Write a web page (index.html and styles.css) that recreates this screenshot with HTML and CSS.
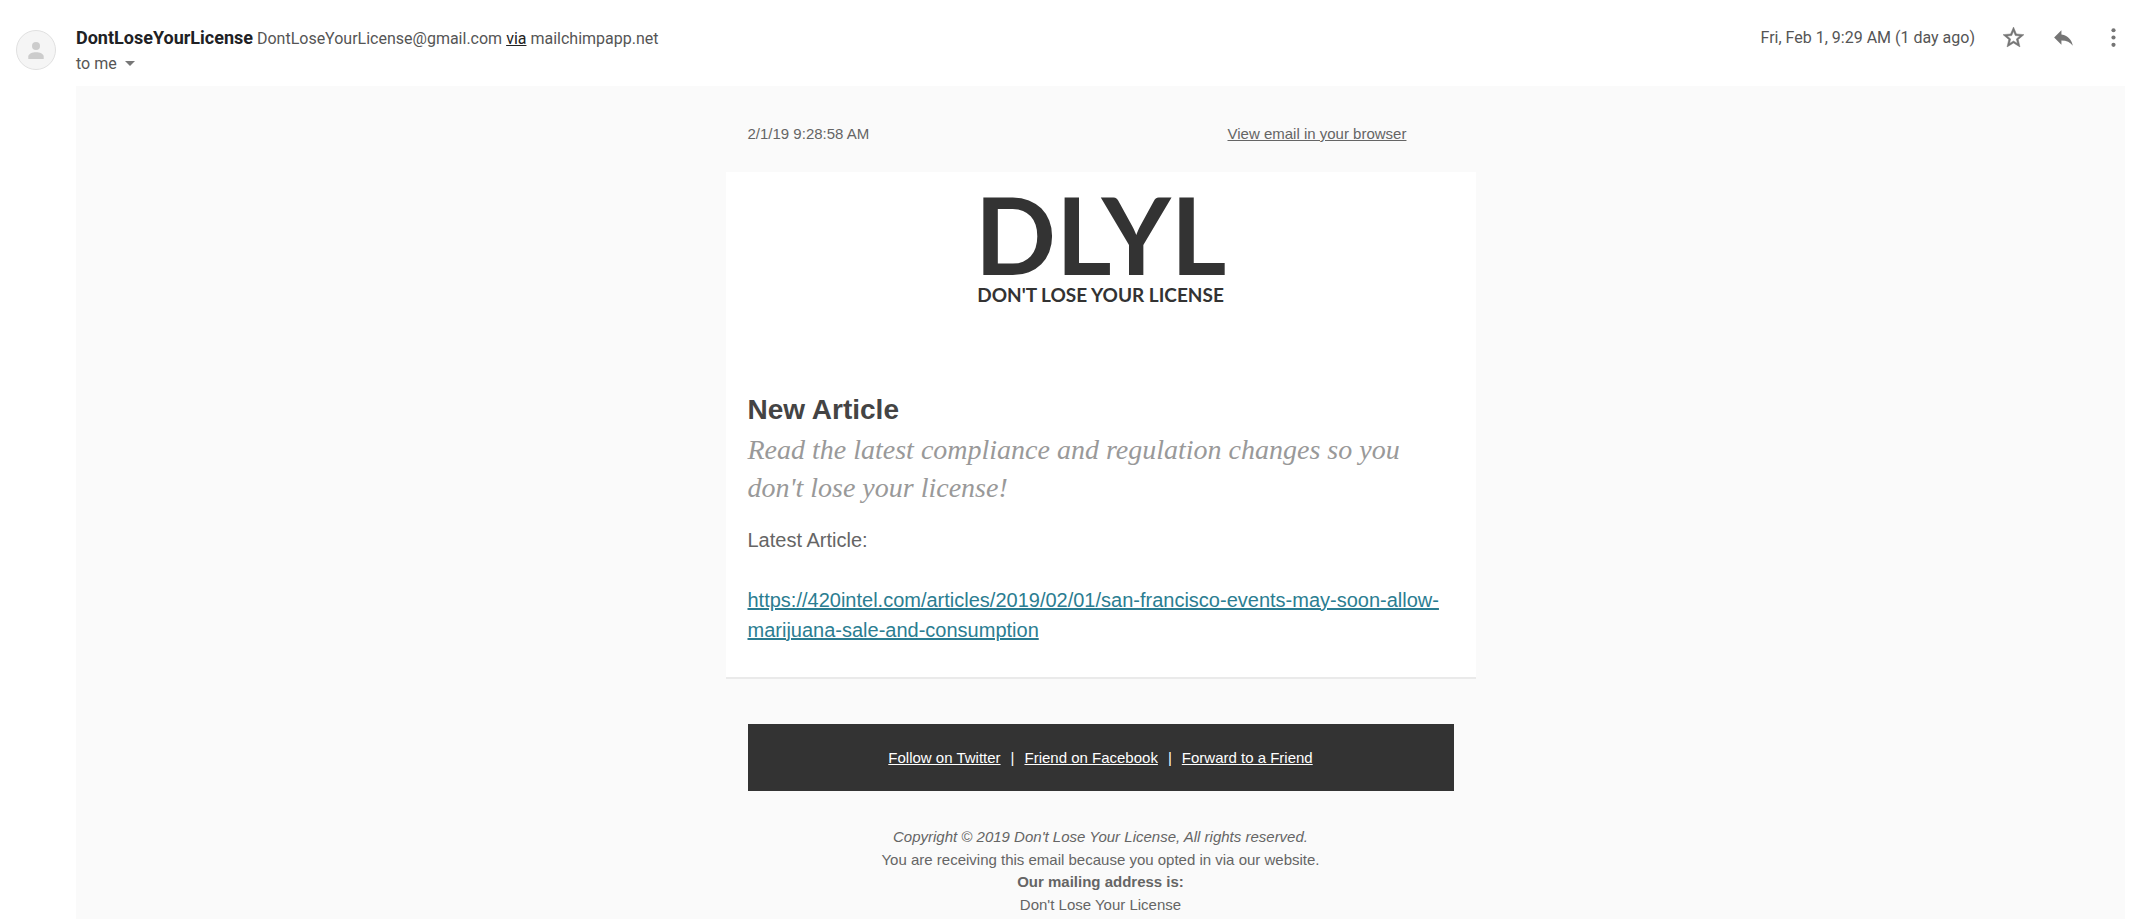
FILE: index.html
```html
<!DOCTYPE html>
<html lang="en">
<head>
<meta charset="utf-8">
<title>New Article</title>
<link rel="stylesheet" href="styles.css">
</head>
<body>
<article class="message">
  <header class="message-header">
    <svg class="avatar" viewBox="0 0 40 40" aria-hidden="true">
      <circle cx="20" cy="20" r="19.5" fill="#f5f5f5" stroke="#e0e0e0"/>
      <circle cx="20" cy="16" r="4" fill="#cccccc"/>
      <path d="M12.300 29v-2.500c0-2.800 4.200-4.300 7.700-4.300s7.700 1.500 7.700 4.300V29z" fill="#cccccc"/>
    </svg>
    <div class="sender">
      <div class="sender-line">
        <span class="sender-name">DontLoseYourLicense</span>
        <span>DontLoseYourLicense@gmail.com <a class="via" href="#">via</a> mailchimpapp.net</span>
      </div>
      <button class="recipient" type="button">to me
        <svg class="caret" viewBox="0 0 10 5" aria-hidden="true"><path d="M0 0h10L5 5z" fill="#777"/></svg>
      </button>
    </div>
    <time class="sent">Fri, Feb 1, 9:29 AM (1 day ago)</time>
    <div class="actions">
      <button class="icon-button" type="button" aria-label="Star">
        <svg viewBox="0 0 24 24" fill="#757575" stroke="#757575" stroke-width=".5"><path d="M22 9.240l-7.190-.62L12 2 9.190 8.630 2 9.240l5.460 4.730L5.820 21 12 17.270 18.180 21l-1.630-7.030L22 9.240zM12 15.400l-3.760 2.270 1-4.280-3.320-2.880 4.380-.38L12 6.100l1.710 4.040 4.380.38-3.320 2.880 1 4.280L12 15.400z"/></svg>
      </button>
      <button class="icon-button" type="button" aria-label="Reply">
        <svg viewBox="0 0 24 24" fill="#757575"><path d="M10 9V5l-7 7 7 7v-4.100c5 0 8.500 1.600 11 5.100-1-5-4-10-11-11z"/></svg>
      </button>
      <button class="icon-button" type="button" aria-label="More">
        <svg viewBox="0 0 24 24" fill="#757575"><circle cx="12" cy="5" r="2"/><circle cx="12" cy="12" r="2"/><circle cx="12" cy="19" r="2"/></svg>
      </button>
    </div>
  </header>

  <div class="mail">
    <div class="preheader">
      <span>2/1/19 9:28:58 AM</span>
      <a href="#">View email in your browser</a>
    </div>
    <main class="card">
      <div class="logo">
        <div class="logo-mark">DLYL</div>
        <div class="logo-name">DON'T LOSE YOUR LICENSE</div>
      </div>
      <h1 class="title">New Article</h1>
      <p class="lead">Read the latest compliance and regulation changes so you don't lose your license!</p>
      <p class="text">Latest Article:</p>
      <p class="text"><a class="article-link" href="#">https://420intel.com/articles/2019/02/01/san-francisco-events-may-soon-allow-marijuana-sale-and-consumption</a></p>
    </main>
    <footer class="footer">
      <nav class="social">
        <a href="#">Follow on Twitter</a><span>|</span><a href="#">Friend on Facebook</a><span>|</span><a href="#">Forward to a Friend</a>
      </nav>
      <div class="legal">
        <em>Copyright © 2019 Don't Lose Your License, All rights reserved.</em><br>
        You are receiving this email because you opted in via our website.<br>
        <strong>Our mailing address is:</strong><br>
        Don't Lose Your License
      </div>
    </footer>
  </div>
</article>
</body>
</html>
```
FILE: styles.css
```css
* {
  box-sizing: border-box;
}

body {
  margin: 0;
  background: #fff;
  font-family: Roboto, "Liberation Sans", sans-serif;
  font-size: 16px;
  color: #555;
}

.message {
  display: flex;
  flex-direction: column;
  min-height: 100vh;
}

.message-header {
  display: flex;
  align-items: flex-start;
  padding: 25px 16px 10px;
}

.avatar {
  width: 40px;
  height: 40px;
  margin: 5px 20px 0 0;
}

.sender {
  flex: 1;
}

.sender-line {
  line-height: 25px;
}

.sender-name {
  font-size: 18px;
  font-weight: 700;
  color: #202124;
}

.via {
  color: #222;
}

.recipient {
  display: flex;
  align-items: center;
  gap: 8px;
  padding: 0;
  border: 0;
  background: none;
  font: inherit;
  line-height: 25px;
  color: inherit;
}

.caret {
  width: 10px;
  height: 5px;
}

.sent {
  line-height: 25px;
}

.actions {
  display: flex;
  gap: 25px;
  margin-left: 26px;
}

.icon-button {
  width: 25px;
  height: 25px;
  padding: 0;
  border: 0;
  background: none;
}

.icon-button svg {
  display: block;
  width: 100%;
}

.mail {
  flex: 1;
  margin: 0 17px 0 76px;
  padding: 34px 0 0;
  background: #fafafa;
  font-family: "Liberation Sans", Arial, sans-serif;
  font-size: 15px;
  line-height: 1.5;
  color: #656565;
}

.mail a {
  color: inherit;
}

.preheader,
.card,
.footer {
  max-width: 750px;
  margin: 0 auto;
}

.preheader {
  display: grid;
  grid-template-columns: 480px 1fr;
  padding: 3px 22px 26px;
}

.card {
  padding: 18px 22px 32px;
  border-bottom: 2px solid #eaeaea;
  background: #fff;
}

.logo {
  padding-bottom: 85px;
  font-family: Lato, sans-serif;
  font-weight: 700;
  color: #333;
  text-align: center;
}

.logo-mark {
  font-size: 107px;
  line-height: 88px;
}

.logo-name {
  margin-top: 5px;
  font-size: 19px;
  line-height: 24px;
}

.title {
  margin: 0 0 3px;
  font-size: 28px;
  line-height: 36px;
  color: #444;
}

.lead {
  margin: 0 0 18px;
  font-family: Georgia, "Liberation Serif", serif;
  font-size: 28px;
  font-style: italic;
  line-height: 38px;
  color: #999;
}

.text {
  margin: 0 0 30px;
  font-size: 20px;
}

.text:last-child {
  margin: 0;
}

.mail .article-link {
  color: #2b7d91;
}

.footer {
  padding: 45px 22px 0;
}

.social {
  display: flex;
  justify-content: center;
  gap: 10px;
  padding: 23px 22px 22px;
  background: #333;
  color: #fff;
}

.legal {
  padding-top: 35px;
  text-align: center;
}
```
